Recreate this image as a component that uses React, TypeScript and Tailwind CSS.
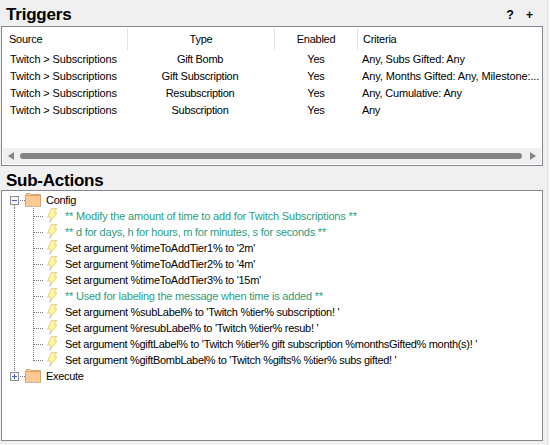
type Trigger = { type: string; typeClass: string; criteria: string; criteriaClass: string };

const triggers: Trigger[] = [
  { type: "Gift Bomb", typeClass: "tracking-[-0.3px]", criteria: "Any, Subs Gifted: Any", criteriaClass: "tracking-[-0.16px]" },
  { type: "Gift Subscription", typeClass: "tracking-[-0.23px]", criteria: "Any, Months Gifted: Any, Milestone:...", criteriaClass: "tracking-[-0.12px]" },
  { type: "Resubscription", typeClass: "tracking-[-0.3px]", criteria: "Any, Cumulative: Any", criteriaClass: "tracking-[-0.2px]" },
  { type: "Subscription", typeClass: "tracking-[-0.3px]", criteria: "Any", criteriaClass: "tracking-[-0.3px]" },
];

const actions = [
  { text: "** Modify the amount of time to add for Twitch Subscriptions **", style: "text-[#2a9d80] tracking-[-0.17px]" },
  { text: "** d for days, h for hours, m for minutes, s for seconds **", style: "text-[#2a9d80] tracking-[-0.23px]" },
  { text: "Set argument %timeToAddTier1% to '2m'", style: "tracking-[-0.27px]" },
  { text: "Set argument %timeToAddTier2% to '4m'", style: "tracking-[-0.27px]" },
  { text: "Set argument %timeToAddTier3% to '15m'", style: "tracking-[-0.27px]" },
  { text: "** Used for labeling the message when time is added **", style: "text-[#2a9d80] tracking-[-0.22px]" },
  { text: "Set argument %subLabel% to 'Twitch %tier% subscription! '", style: "tracking-[-0.27px]" },
  { text: "Set argument %resubLabel% to 'Twitch %tier% resub! '", style: "tracking-[-0.29px]" },
  { text: "Set argument %giftLabel% to 'Twitch %tier% gift subscription %monthsGifted% month(s)! '", style: "tracking-[-0.31px]" },
  { text: "Set argument %giftBombLabel% to 'Twitch %gifts% %tier% subs gifted! '", style: "tracking-[-0.31px]" },
];

function Bolt() {
  return (
    <svg width="11" height="16" viewBox="0 0 11 16" className="ml-[3px] shrink-0">
      <path d="M4.2 .8 L9.8 .6 L7.3 5 L9.8 5.2 L2.4 15 L4.2 9 L.8 9.2 Z" fill="#fffc88" stroke="#dfcba4" strokeWidth="1" />
    </svg>
  );
}

function Folder() {
  return (
    <svg width="16" height="16" viewBox="0 0 16 16" className="shrink-0">
      <path d="M.5 14.5 V3.5 L1.5 1.5 H5 L6 2.5 H15.5 V14.5 Z" fill="#ffc993" stroke="#d5a36d" />
      <path d="M1 3.5 H15" stroke="#dda96f" />
      <path d="M0 14.5 H16" stroke="#cdb99a" />
    </svg>
  );
}

function Group({ label, open }: { label: string; open?: boolean }) {
  return (
    <div className="flex h-4 items-center pl-2">
      <svg width="15" height="16" viewBox="0 0 15 16" shapeRendering="crispEdges" className="shrink-0">
        {open && <path d="M4.5 13 V16" stroke="#777" strokeDasharray="1 1" />}
        {!open && <path d="M4.5 0 V4" stroke="#777" strokeDasharray="1 1" />}
        <rect x=".5" y="4.5" width="8" height="8" fill="#f7f7f7" stroke="#919191" />
        <path d="M2 8.5 H7" stroke="#4b63a7" />
        {!open && <path d="M4.5 6 V11" stroke="#4b63a7" />}
        <path d="M10 8.5 H15" stroke="#777" strokeDasharray="1 1" />
      </svg>
      <Folder />
      <span className="ml-[5px] tracking-[-0.3px]">{label}</span>
    </div>
  );
}

export default function App() {
  return (
    <div className="flex h-[445px] w-[550px] overflow-hidden bg-[#f0f0f0] font-['Liberation_Sans',Arial,sans-serif] text-[11px] leading-4 text-black">
      <main className="ml-px flex w-[542px] shrink-0 flex-col whitespace-pre">
        <header className="flex h-[26px] items-center pl-[5px]">
          <h1 className="mt-[3px] text-[17px] leading-5 font-bold tracking-[-0.2px]">Triggers</h1>
          <button className="mt-[3px] ml-auto text-[12.5px] font-bold">?</button>
          <button className="mt-1 mr-[10px] ml-[12px] text-[12px] font-bold">+</button>
        </header>
        <section className="flex h-[140px] flex-col border border-[#828790] bg-white">
          <div className="mt-px flex h-[22px] items-center tracking-[-0.25px]">
            <div className="flex h-full w-[126px] items-center border-r border-[#e3e3e3] pl-[7px]">Source</div>
            <div className="flex h-full w-[147px] items-center justify-center border-r border-[#e3e3e3]">Type</div>
            <div className="flex h-full w-[83px] items-center justify-center border-r border-[#e3e3e3]">Enabled</div>
            <div className="pl-[5px]">Criteria</div>
          </div>
          {triggers.map((t) => (
            <div key={t.type} className="flex h-[17px] items-center">
              <div className="w-[126px] shrink-0 pl-2 tracking-[-0.13px]">Twitch &gt; Subscriptions</div>
              <div className="w-[144px] shrink-0 text-center"><span className={t.typeClass}>{t.type}</span></div>
              <div className="w-[88px] shrink-0 text-center tracking-[-0.2px]">Yes</div>
              <div className="shrink-0 pl-[2px]"><span className={t.criteriaClass}>{t.criteria}</span></div>
            </div>
          ))}
          <div className="mx-px mt-auto mb-px flex h-4 items-center bg-[#f0f0f0]">
            <svg width="12" height="10" viewBox="0 0 12 10" className="ml-[5px] shrink-0"><path d="M0 5 L6 1 V9 Z" fill="#858585" /></svg>
            <div className="h-1.5 w-[502px] shrink-0 rounded-full bg-[#858585]" />
            <svg width="6" height="10" viewBox="0 0 6 10" className="ml-2 shrink-0"><path d="M0 1 L6 5 L0 9 Z" fill="#858585" /></svg>
          </div>
        </section>
        <h2 className="flex h-6 items-center pt-[5px] pl-[5px] text-[17px] leading-5 font-bold tracking-[-0.25px]">Sub-Actions</h2>
        <section className="h-[251px] border border-[#828790] bg-white pt-px">
          <Group label="Config" open />
          <div className="flex">
            <svg width="42" height="160" viewBox="0 0 42 160" shapeRendering="crispEdges" className="shrink-0">
              <path d="M12.5 0 V160 M31.5 0 V153" stroke="#777" strokeDasharray="1 1" />
              {actions.map((a, i) => <path key={a.text} d={`M32 ${i * 16 + 8.5} H42`} stroke="#777" strokeDasharray="1 1" />)}
            </svg>
            <div>
              {actions.map((a) => (
                <div key={a.text} className="flex h-4 items-center">
                  <Bolt />
                  <span className={`ml-[7px] ${a.style}`}>{a.text}</span>
                </div>
              ))}
            </div>
          </div>
          <Group label="Execute" />
        </section>
      </main>
      <div className="ml-1 flex-1 border-l border-[#e3e3e3] bg-[#f5f5f5]" />
    </div>
  );
}
